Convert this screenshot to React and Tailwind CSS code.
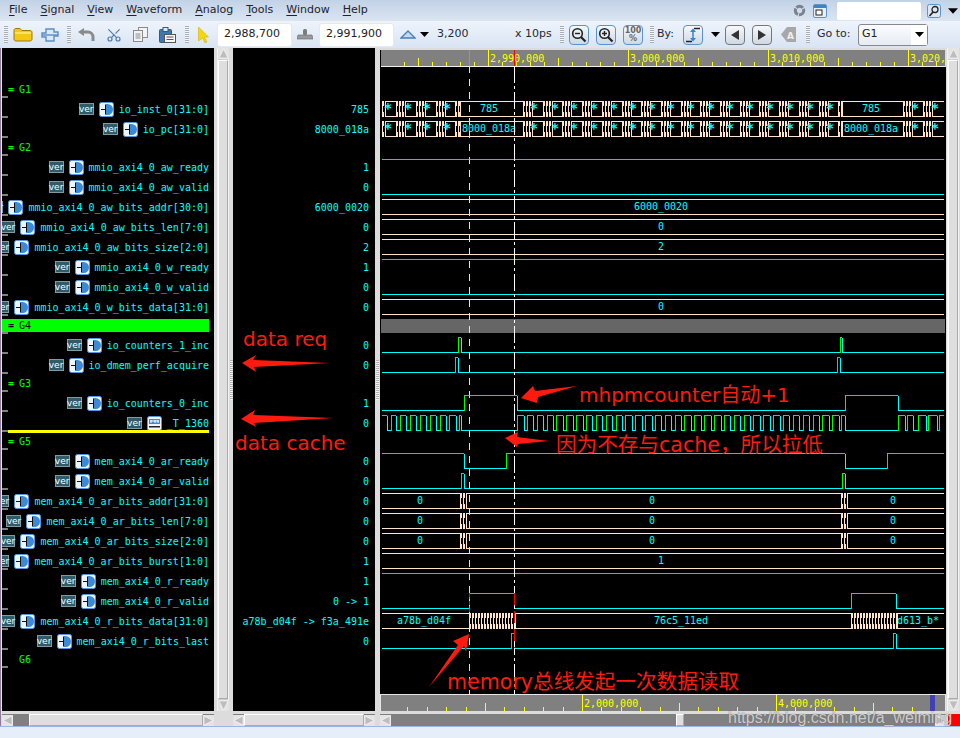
import { Scissors } from 'lucide-react';

const SIGNALS = [
  { group: 'G1' },
  { name: 'io_inst_0[31:0]', value: '785' },
  { name: 'io_pc[31:0]', value: '8000_018a' },
  { group: 'G2' },
  { name: 'mmio_axi4_0_aw_ready', value: '1' },
  { name: 'mmio_axi4_0_aw_valid', value: '0' },
  { name: 'mmio_axi4_0_aw_bits_addr[30:0]', value: '6000_0020' },
  { name: 'mmio_axi4_0_aw_bits_len[7:0]', value: '0' },
  { name: 'mmio_axi4_0_aw_bits_size[2:0]', value: '2' },
  { name: 'mmio_axi4_0_w_ready', value: '1' },
  { name: 'mmio_axi4_0_w_valid', value: '0' },
  { name: 'mmio_axi4_0_w_bits_data[31:0]', value: '0' },
  { group: 'G4', selected: true },
  { name: 'io_counters_1_inc', value: '0' },
  { name: 'io_dmem_perf_acquire', value: '0' },
  { group: 'G3' },
  { name: 'io_counters_0_inc', value: '1' },
  { name: '_T_1360', value: '0', hist: true, marker: true },
  { group: 'G5' },
  { name: 'mem_axi4_0_ar_ready', value: '0' },
  { name: 'mem_axi4_0_ar_valid', value: '0' },
  { name: 'mem_axi4_0_ar_bits_addr[31:0]', value: '0' },
  { name: 'mem_axi4_0_ar_bits_len[7:0]', value: '0' },
  { name: 'mem_axi4_0_ar_bits_size[2:0]', value: '0' },
  { name: 'mem_axi4_0_ar_bits_burst[1:0]', value: '1' },
  { name: 'mem_axi4_0_r_ready', value: '1' },
  { name: 'mem_axi4_0_r_valid', value: '0 -> 1' },
  { name: 'mem_axi4_0_r_bits_data[31:0]', value: 'a78b_d04f -> f3a_491e' },
  { name: 'mem_axi4_0_r_bits_last', value: '0' },
  { group: 'G6', plain: true },
];

const GREEN = '#00ff00';
const CYAN = '#00ffff';
const PEACH = '#ffe3cb';
const YELLOW = '#ffff00';
const X0 = 382;
const X1 = 944;

// one-bit trace: edges are x positions where the level flips
function Bit({ c, edges = [], high = false }) {
  const hi = c - 7.5;
  const lo = c + 7.5;
  let g = '';
  let b = '';
  let level = high;
  let x = X0;
  [...edges, X1].forEach((e, i) => {
    const y = level ? hi : lo;
    const seg = `M${x} ${y}H${e}`;
    if (level) g += seg;
    else b += seg;
    if (i < edges.length) {
      if (level) b += `M${e + 0.5} ${hi}V${lo}`;
      else g += `M${e + 0.5} ${hi}V${lo}`;
      level = !level;
    }
    x = e;
  });
  return (
    <g fill="none">
      <path d={b} stroke={CYAN} />
      <path d={g} stroke={GREEN} />
    </g>
  );
}

// multi-bit trace: blocks are [from, to] ranges packed with transitions
function Bus({ c, blocks = [] }) {
  const top = c - 7.5;
  const bot = c + 7.5;
  let lines = '';
  let x = X0;
  blocks.forEach(([a, b]) => {
    lines += `M${x} ${top}H${a}M${x} ${bot}H${a}`;
    x = b;
  });
  lines += `M${x} ${top}H${X1}M${x} ${bot}H${X1}`;
  return (
    <g>
      <path d={lines} stroke={PEACH} fill="none" />
      {blocks.map(([a, b]) => {
        const bars = [];
        for (let i = a; i < b; i += 3) {
          bars.push(
            <g key={i} fill={PEACH}>
              <rect x={i} y={c - 8} width={2} height={5} />
              <rect x={i} y={c - 3} width={1} height={6} />
              <rect x={i} y={c + 3} width={2} height={5} />
            </g>
          );
        }
        return (
          <g key={a}>
            {bars}
            <rect x={b} y={c - 8} width={1} height={16} fill={PEACH} />
          </g>
        );
      })}
    </g>
  );
}

const instBlocks = () => {
  const out = [[382, 385], [396, 405], [416, 425], [436, 445], [455, 460]];
  for (let k = 0; k < 16; k++) {
    const s = 523 + k * 19.7;
    out.push([Math.round(s), Math.round(s) + 9]);
  }
  out.push([838, 842], [903, 912], [923, 932]);
  return out;
};
const stars = [388, 408, 427, 447, 534, 555, 574, 594, 614, 633, 652, 671, 691, 711, 730, 750, 770, 790, 810, 830, 915, 935];

const clockEdges = () => {
  const e = [387, 391, 396, 400, 406, 410, 416, 420, 426, 430, 436, 440, 446, 449, 456, 459, 461];
  for (let x = 517; x < 835; x += 9.85) e.push(Math.round(x), Math.round(x + 6.5));
  e.push(841, 845, 898, 905, 907, 913, 918, 926, 928, 937, 939);
  return e;
};

function TopRuler() {
  const ticks = [];
  for (let x = 404; x < 945; x += 14) {
    const k = Math.round((x - 488) / 14);
    const major = k % 10 === 0;
    const mid = !major && k % 5 === 0;
    ticks.push(
      <path key={x} d={`M${x + 0.5} ${major ? 50 : mid ? 58 : 62}V66`} stroke={YELLOW} />
    );
  }
  return (
    <g>
      <rect x={380} y={48} width={566} height={2} fill="#dcdcdc" />
      <rect x={380} y={50} width={1} height={17} fill="#000" />
      <rect x={381} y={50} width={564} height={16} fill="#808080" />
      <rect x={381} y={66} width={564} height={1} fill="#f0f0f0" />
      <rect x={945} y={50} width={1} height={17} fill="#dcdcdc" />
      {ticks}
      {[[490, '2,990,000'], [630, '3,000,000'], [770, '3,010,000'], [910, '3,020,']].map(([x, t]) => (
        <text key={t} x={x} y={62} fill={YELLOW}>{t}</text>
      ))}
      <rect x={469} y={50} width={1} height={16} fill={GREEN} />
      <rect x={514} y={50} width={1} height={16} fill="#ff0000" />
    </g>
  );
}

function BottomRuler() {
  const ticks = [];
  for (let k = 1; k * 19.4 + 388 < 944; k++) {
    const x = Math.round(388 + k * 19.4);
    const major = k % 10 === 0;
    const mid = !major && k % 5 === 0;
    ticks.push(
      <path key={k} d={`M${x + 0.5} ${major ? 695 : mid ? 703 : 707}V711`} stroke={YELLOW} />
    );
  }
  return (
    <g>
      <rect x={380} y={694} width={566} height={17} fill="#e6e6e6" />
      <rect x={381} y={695} width={564} height={16} fill="#808080" />
      {ticks}
      <text x={584} y={707} fill={YELLOW}>2,000,000</text>
      <text x={778} y={707} fill={YELLOW}>4,000,000</text>
      <rect x={930} y={695} width={5} height={16} fill="#4040b0" />
    </g>
  );
}

function Waves() {
  const label = (x, y, t, anchor = 'middle') => (
    <text x={x} y={y + 4} fill={CYAN} textAnchor={anchor}>{t}</text>
  );
  const inst = instBlocks();
  return (
    <svg
      width={566}
      height={663}
      viewBox="380 48 566 663"
      className="block font-['DejaVu_Sans_Mono',monospace] text-[10px]"
      shapeRendering="crispEdges"
    >
      <rect x={380} y={48} width={566} height={663} fill="#000" />
      <TopRuler />

      <Bus c={109} blocks={inst} />
      <Bus c={129} blocks={inst} />
      {stars.map(x => (
        <g key={x} fontSize={14} fontWeight="bold">
          <text x={x} y={113} fill={CYAN} textAnchor="middle">*</text>
          <text x={x} y={133} fill={CYAN} textAnchor="middle">*</text>
        </g>
      ))}
      {label(489, 108, '785')}
      {label(871, 108, '785')}
      {label(489, 128, '8000_018a')}
      {label(871, 128, '8000_018a')}

      <Bit c={167} high />
      <Bit c={187} />
      <Bus c={207} />
      {label(661, 206, '6000_0020')}
      <Bus c={227} />
      {label(661, 226, '0')}
      <Bus c={247} />
      {label(661, 246, '2')}
      <Bit c={267} high />
      <Bit c={287} />
      <Bus c={307} />
      {label(661, 306, '0')}

      <rect x={381} y={319} width={564} height={14} fill="#666666" />

      <Bit c={345} edges={[458, 461, 840, 842]} />
      <Bit c={365} edges={[455, 458, 837, 840]} />
      <Bit c={403} edges={[464, 517, 845, 898]} />
      <Bit c={423} high edges={clockEdges()} />
      <Bit c={461} high edges={[464, 506, 845, 887]} />
      <Bit c={481} edges={[461, 464, 842, 845]} />

      {[501, 521, 541].map(c => (
        <g key={c}>
          <Bus c={c} blocks={[[460, 466], [841, 847]]} />
          {label(420, c - 1, '0')}
          {label(652, c - 1, '0')}
          {label(893, c - 1, '0')}
        </g>
      ))}
      <Bus c={561} />
      {label(661, 560, '1')}
      <Bit c={581} high />
      <Bit c={601} edges={[469, 514, 851, 896]} />
      <Bus c={621} blocks={[[469, 515], [851, 897]]} />
      {label(424, 620, 'a78b_d04f')}
      {label(681, 620, '76c5_11ed')}
      {label(897, 620, 'd613_b*', 'start')}
      <Bit c={641} edges={[511, 514, 893, 896]} />

      <path d="M469.5 66V694" stroke={YELLOW} strokeDasharray="7 6" fill="none" />
      <path d="M514.5 66V694" stroke="#ffffff" strokeDasharray="17 3 3 3" fill="none" />
      <path d="M514.5 593V648" stroke="#ff0000" strokeDasharray="12 6" fill="none" />
      <path d="M469.5 593V612" stroke="#ff0000" strokeDasharray="4 4" fill="none" />

      <BottomRuler />
    </svg>
  );
}

function GateIcon({ hist }) {
  return (
    <svg width={15} height={15} viewBox="0 0 15 15" className="shrink-0">
      <rect x={0.5} y={0.5} width={14} height={14} rx={2} fill="#eef4fb" stroke="#5a94d8" />
      {hist ? (
        <g>
          <rect x={2} y={3} width={11} height={5} fill="#3a8ad8" />
          <path d="M3 5h9M4 4v3M8 4v3M11 4v3" stroke="#fff" />
          <rect x={2} y={10} width={11} height={1.5} fill="#222" />
        </g>
      ) : (
        <g>
          <path d="M6 2h2.5a5.5 5.5 0 0 1 0 11H6z" fill="#3a8ad8" />
          <path d="M2 7.5h5M6.5 3v9" stroke="#111" />
        </g>
      )}
    </svg>
  );
}

function VerBadge() {
  return (
    <span className="flex h-[12px] w-[15px] shrink-0 items-center justify-center border border-[#7f9aa0] bg-[#2f5c68] font-['DejaVu_Sans',sans-serif] text-[9px] leading-none text-white">
      ver
    </span>
  );
}

function SignalRow({ s }) {
  if (s.group) {
    return (
      <div className="relative h-[18px] shrink-0">
        <div className={`flex h-[13px] w-[207px] translate-y-[2px] items-center pl-[6px] ${s.selected ? 'bg-[#00ff00] text-black' : 'text-[#00ff00]'}`}>
          <span className="w-[11px] font-bold">{s.plain ? '' : '='}</span>
          <span>{s.group}</span>
        </div>
        <span className="absolute bottom-[1px] left-0 h-[2px] w-[6px] bg-[#808080]" />
      </div>
    );
  }
  return (
    <div className="relative flex h-[20px] shrink-0 items-center justify-end gap-[5px] overflow-hidden pr-[5px] text-[#00ffff]">
      <VerBadge />
      <GateIcon hist={s.hist} />
      <span className="shrink-0 whitespace-pre">{s.name}</span>
      <span className="absolute bottom-[1px] left-0 h-[2px] w-[6px] bg-[#808080]" />
      {s.marker && <span className="absolute bottom-0 left-[6px] h-[3px] w-[201px] bg-[#ffff00]" />}
    </div>
  );
}

function ArrowBtn({ dir }) {
  const pts = { up: '5.5,1 10,10 1,10', down: '1,1 10,1 5.5,10', left: '10,1 10,10 1,5.5', right: '1,1 1,10 10,5.5' }[dir];
  return (
    <svg width={11} height={11} viewBox="0 0 11 11" className="shrink-0">
      <rect width={11} height={11} fill="#e4e4e4" />
      <polygon points={pts} fill="#bdbdbd" stroke="#fff" strokeWidth={0.6} />
    </svg>
  );
}

function VScroll() {
  return (
    <div className="flex h-[663px] w-[12px] shrink-0 flex-col items-center border-x border-[#f4f4f4] bg-[#cfcfcf]">
      <ArrowBtn dir="up" />
      <div className="my-[1px] w-full flex-1 border border-[#aaa] border-t-white border-l-white bg-[#dedede]" />
      <ArrowBtn dir="down" />
    </div>
  );
}

function HScroll({ className, before, after, thumb }) {
  return (
    <div className={`flex h-[12px] shrink-0 items-center bg-[#808080] ${className}`}>
      <ArrowBtn dir="left" />
      <div className={before} />
      <div className={`h-full border border-[#aaa] border-t-white border-l-white bg-[#dedede] ${thumb}`} />
      <div className={after} />
      <ArrowBtn dir="right" />
    </div>
  );
}

function Splitter() {
  return (
    <div className="h-[40px] w-[3px] bg-[repeating-linear-gradient(#b0b0b0_0_1px,#f2f2f2_1px_2px)]" />
  );
}

function Grip({ className = '' }) {
  return (
    <div className={`h-[17px] w-[4px] shrink-0 bg-[repeating-linear-gradient(#a8adb5_0_1px,#f4f6fa_1px_2px)] ${className}`} />
  );
}

function ToolText({ className = '', children }) {
  return <span className={`shrink-0 whitespace-pre text-[#222b33] ${className}`}>{children}</span>;
}

function NumField({ className, children }) {
  return (
    <div className={`flex h-[24px] w-[75px] shrink-0 items-center rounded-[3px] border border-[#e8e8e8] bg-white pl-[6px] text-[#222] ${className}`}>
      {children}
    </div>
  );
}

function Down({ className = '' }) {
  return (
    <svg width={9} height={5} viewBox="0 0 9 5" className={`shrink-0 ${className}`}>
      <polygon points="0,0 9,0 4.5,5" fill="#000" />
    </svg>
  );
}

function ToolBtn({ className = '', tone = 'blue', children }) {
  const border = tone === 'blue' ? 'border-[#5a94d0]' : 'border-[#777]';
  return (
    <div className={`flex h-[20px] w-[20px] shrink-0 items-center justify-center rounded-[4px] border bg-gradient-to-b from-[#f6f8fb] to-[#cfd8e2] ${border} ${className}`}>
      {children}
    </div>
  );
}

function Lens({ plus }) {
  return (
    <svg width={16} height={16} viewBox="0 0 16 16" fill="none" stroke="#222">
      <circle cx={6.5} cy={6.5} r={4.8} strokeWidth={1.6} fill="#e8eef4" />
      <path d="M10 10l4.5 4.5" strokeWidth={2.2} />
      <path d={plus ? 'M4 6.5h5M6.5 4v5' : 'M4 6.5h5'} strokeWidth={1.4} />
    </svg>
  );
}

function MenuBar() {
  const items = [['F', 'ile'], ['S', 'ignal'], ['V', 'iew'], ['W', 'aveform'], ['A', 'nalog'], ['T', 'ools'], ['W', 'indow'], ['H', 'elp']];
  return (
    <div className="flex h-[21px] shrink-0 items-center bg-gradient-to-b from-[#c2d2e6] to-[#dbe5f1] pl-[9px] text-[#1c232b]">
      <div className="flex gap-[13px]">
        {items.map(([u, rest]) => (
          <span key={u + rest} className="whitespace-pre">
            <span className="underline underline-offset-2">{u}</span>{rest}
          </span>
        ))}
      </div>
      <svg width={13} height={13} viewBox="0 0 13 13" className="ml-auto shrink-0" fill="none">
        <circle cx={6.5} cy={6.5} r={4.2} stroke="#7b828c" strokeWidth={3} strokeDasharray="7 1" />
      </svg>
      <svg width={14} height={14} viewBox="0 0 14 14" className="ml-[7px] shrink-0">
        <rect x={0.5} y={0.5} width={13} height={13} rx={1.5} fill="#e8eff7" stroke="#5a94d0" />
        <rect x={1} y={1} width={12} height={3} fill="#3f83c4" />
        <rect x={3} y={6} width={6} height={5} fill="#fff" stroke="#222" />
      </svg>
      <div className="ml-[10px] h-[18px] w-[84px] shrink-0 rounded-[2px] bg-white" />
      <svg width={14} height={14} viewBox="0 0 14 14" className="ml-[6px] shrink-0" fill="none">
        <rect x={0.5} y={0.5} width={13} height={13} rx={2} fill="#dbe8f4" stroke="#5a94d0" />
        <circle cx={8} cy={5.5} r={3} stroke="#222" strokeWidth={1.3} />
        <path d="M6 8l-3.5 4" stroke="#222" strokeWidth={1.6} />
      </svg>
      <Down className="ml-[7px] mr-[2px] !h-[6px] !w-[10px]" />
    </div>
  );
}

function Toolbar() {
  return (
    <div className="flex h-[27px] shrink-0 items-center bg-gradient-to-b from-[#eef4fc] to-[#d9e4f3] pl-[4px]">
      <Grip />
      {/* folder */}
      <svg width={20} height={15} viewBox="0 0 20 15" className="ml-[5px] shrink-0">
        <path d="M1 3.5C1 2 2 1.5 3 1.5h4l2 2h8c1.2 0 2 .8 2 2V12c0 1.2-.8 2-2 2H3c-1.2 0-2-.8-2-2z" fill="#f5c518" stroke="#9a7a10" />
        <path d="M2 6h16" stroke="#fde98a" strokeWidth={1.5} />
      </svg>
      {/* reload */}
      <svg width={18} height={14} viewBox="0 0 18 14" className="ml-[8px] shrink-0" fill="#dbe9f7" stroke="#5b8fc2" strokeWidth={1.4}>
        <path d="M5 1h8v3h4v4h-4v5H5V9H1V5h4z" />
        <path d="M1 7h16" stroke="#5b8fc2" />
      </svg>
      <Grip className="ml-[8px]" />
      {/* undo */}
      <svg width={17} height={14} viewBox="0 0 17 14" className="ml-[7px] shrink-0" fill="none">
        <path d="M4 4h6a5 5 0 0 1 5 5v4" stroke="#8a8a8a" strokeWidth={3} />
        <polygon points="0,4 6,0 6,8" fill="#8a8a8a" />
      </svg>
      <Scissors size={16} strokeWidth={1.8} className="ml-[11px] shrink-0 -rotate-90 text-[#4f7cab]" />
      {/* copy */}
      <svg width={16} height={15} viewBox="0 0 16 15" className="ml-[10px] shrink-0" fill="#f3f3f3" stroke="#8a8a8a">
        <rect x={6.5} y={0.5} width={9} height={10} />
        <rect x={1.5} y={3.5} width={9} height={11} />
        <path d="M3.5 7h5M3.5 9h5M3.5 11h5" />
      </svg>
      {/* paste */}
      <svg width={17} height={16} viewBox="0 0 17 16" className="ml-[11px] shrink-0">
        <rect x={0.5} y={2.5} width={12} height={13} rx={1} fill="#3f78b0" stroke="#2e5c8a" />
        <rect x={4} y={0.5} width={5} height={4} fill="#dce8f4" stroke="#2e5c8a" />
        <rect x={5.5} y={7.5} width={11} height={8} fill="#f6f6f6" stroke="#555" />
        <path d="M7.5 10h7M7.5 12.5h7" stroke="#555" />
      </svg>
      <Grip className="ml-[9px]" />
      {/* pointer */}
      <svg width={11} height={16} viewBox="0 0 11 16" className="ml-[9px] shrink-0">
        <polygon points="0.5,0 10.5,10 6.5,10 9,15 7,16 4.5,11 0.5,14" fill="#f7d800" stroke="#c8a800" strokeWidth={0.5} />
      </svg>
      <NumField className="ml-[8px]">2,988,700</NumField>
      {/* marker */}
      <svg width={16} height={11} viewBox="0 0 16 11" className="ml-[5px] shrink-0">
        <rect x={6} y={0} width={4} height={6} rx={1.5} fill="#7d7d7d" />
        <path d="M1 6h14l1 4H0z" fill="#9a9a9a" stroke="#666" strokeWidth={0.6} />
      </svg>
      <NumField className="ml-[6px]">2,991,900</NumField>
      <svg width={16} height={9} viewBox="0 0 16 9" className="ml-[6px] shrink-0">
        <polygon points="8,1 15,8 1,8" fill="#c9d8ea" stroke="#4a7fb8" strokeWidth={1.4} />
      </svg>
      <Down className="ml-[4px]" />
      <ToolText className="ml-[8px] w-[32px]">3,200</ToolText>
      <ToolText className="ml-[46px] w-[38px]">x 10ps</ToolText>
      <Grip className="ml-[7px]" />
      <ToolBtn className="ml-[5px]"><Lens /></ToolBtn>
      <ToolBtn className="ml-[7px]"><Lens plus /></ToolBtn>
      <ToolBtn className="ml-[7px]">
        <span className="text-center text-[8px] font-bold leading-[8px] text-[#666]">100<br />%</span>
      </ToolBtn>
      <Grip className="ml-[7px]" />
      <ToolText className="ml-[3px] w-[18px]">By:</ToolText>
      <ToolBtn className="ml-[8px]">
        <svg width={16} height={16} viewBox="0 0 16 16" fill="none">
          <path d="M9 1.5h6M1 14.5h6" stroke="#222" strokeWidth={1.5} />
          <path d="M8 3v10" stroke="#2e86d8" strokeWidth={1.5} />
          <polygon points="8,1.5 11,5 5,5" fill="#2e86d8" />
          <polygon points="8,14.5 11,11 5,11" fill="#2e86d8" />
        </svg>
      </ToolBtn>
      <Down className="ml-[8px]" />
      <ToolBtn className="ml-[5px]" tone="gray">
        <svg width={10} height={10} viewBox="0 0 10 10"><polygon points="9,0 9,10 1,5" fill="#333" /></svg>
      </ToolBtn>
      <ToolBtn className="ml-[7px]" tone="gray">
        <svg width={10} height={10} viewBox="0 0 10 10"><polygon points="1,0 1,10 9,5" fill="#333" /></svg>
      </ToolBtn>
      <svg width={15} height={15} viewBox="0 0 15 15" className="ml-[9px] shrink-0">
        <polygon points="0,7.5 6,0 15,0 15,15 6,15" fill="#a8a8a8" />
        <text x={6} y={11.5} fontSize={9} fontWeight="bold" fill="#eee">A</text>
      </svg>
      <Grip className="ml-[10px]" />
      <ToolText className="ml-[7px] w-[35px]">Go to:</ToolText>
      <div className="ml-[6px] flex h-[22px] w-[70px] shrink-0 items-center rounded-[3px] border border-[#888] bg-gradient-to-b from-[#fbfcfe] to-[#e6ecf4] pl-[3px] text-[#222]">
        G1
        <span className="ml-auto flex h-full w-[16px] items-center justify-center bg-white">
          <Down />
        </span>
      </div>
    </div>
  );
}

function Annotations() {
  const cls = "absolute whitespace-pre font-['DejaVu_Sans','Noto_Sans_CJK_SC',sans-serif] leading-none text-[#ff1a10]";
  return (
    <>
      <svg width={960} height={738} className="pointer-events-none absolute left-0 top-0">
        <g fill="#ff1a10">
          <polygon points="242,363 256,355 253,360 330,363 254,367 256,372" />
          <polygon points="241,419 255,410 253,415 334,418 254,423 256,427" />
          <polygon points="521,398 533,386 535,391 577,386 538,397 537,403" />
          <polygon points="505,438 518,432 517,437 549,441 518,444 517,447" />
          <polygon points="469,634 453,641 458,645 429,687 464,646 466,652" />
        </g>
      </svg>
      <span className={`${cls} left-[243px] top-[329px] text-[20px]`}>data req</span>
      <span className={`${cls} left-[235px] top-[433px] text-[20px]`}>data cache</span>
      <span className={`${cls} left-[579px] top-[385px] text-[20px]`}>mhpmcounter自动+1</span>
      <span className={`${cls} left-[556px] top-[435px] text-[20.6px]`}>因为不存与cache，所以拉低</span>
      <span className={`${cls} left-[447px] top-[672px] text-[20.6px]`}>memory总线发起一次数据读取</span>
      <span className="absolute left-[728px] top-[709px] whitespace-pre font-['Liberation_Sans',sans-serif] text-[16px] leading-[18px] text-white/70 [text-shadow:0_0_1px_#555]">
        https://blog.csdn.net/a_weiming
      </span>
    </>
  );
}

export default function App() {
  return (
    <div className="relative flex h-[738px] w-[960px] flex-col overflow-hidden bg-[#dcdcdc] font-['DejaVu_Sans',sans-serif] text-[11px]">
      <MenuBar />
      <Toolbar />

      {/* panes */}
      <div className="flex h-[666px] shrink-0 items-start">
        <div className="h-full w-[2px] shrink-0 border-l border-[#8f7a9c] bg-[#e8e4ee]" />
        <div className="flex h-[663px] w-[212px] shrink-0 flex-col bg-black pt-[33px] font-['DejaVu_Sans_Mono',monospace] text-[10px]">
          {SIGNALS.map((s, i) => <SignalRow key={i} s={s} />)}
        </div>
        <div className="w-[3px] shrink-0" />
        <VScroll />
        <div className="flex h-[663px] w-[4px] shrink-0 items-center justify-center"><Splitter /></div>
        <div className="flex h-[663px] w-[142px] shrink-0 flex-col bg-black pt-[33px] font-['DejaVu_Sans_Mono',monospace] text-[10px] text-[#00ffff]">
          {SIGNALS.map((s, i) => (
            <div key={i} className={`flex shrink-0 items-center justify-end pr-[6px] ${s.group ? 'h-[18px]' : 'h-[20px]'}`}>
              {s.value}
            </div>
          ))}
        </div>
        <div className="flex h-[663px] w-[5px] shrink-0 items-center justify-center"><Splitter /></div>
        <Waves />
        <div className="w-[1px] shrink-0" />
        <VScroll />
      </div>

      {/* horizontal scrollbars */}
      <div className="flex h-[12px] shrink-0">
        <div className="w-[2px] shrink-0 border-l border-[#8f7a9c]" />
        <HScroll className="w-[212px]" before="h-full w-[16px]" thumb="w-[174px]" after="h-full w-0" />
        <div className="w-[19px] shrink-0" />
        <HScroll className="w-[142px]" before="h-full w-0" thumb="w-[120px]" after="h-full w-0" />
        <div className="w-[5px] shrink-0" />
        <HScroll className="w-[566px]" before="h-full w-[285px]" thumb="w-[8px]" after="h-full flex-1" />
        <div className="w-[2px] shrink-0" />
        <div className="h-[12px] w-[12px] shrink-0 bg-[#ff0000]" />
      </div>

      <div className="flex-1 border-t border-[#9fb6dc] bg-[#e6eef9]" />

      <Annotations />
    </div>
  );
}
